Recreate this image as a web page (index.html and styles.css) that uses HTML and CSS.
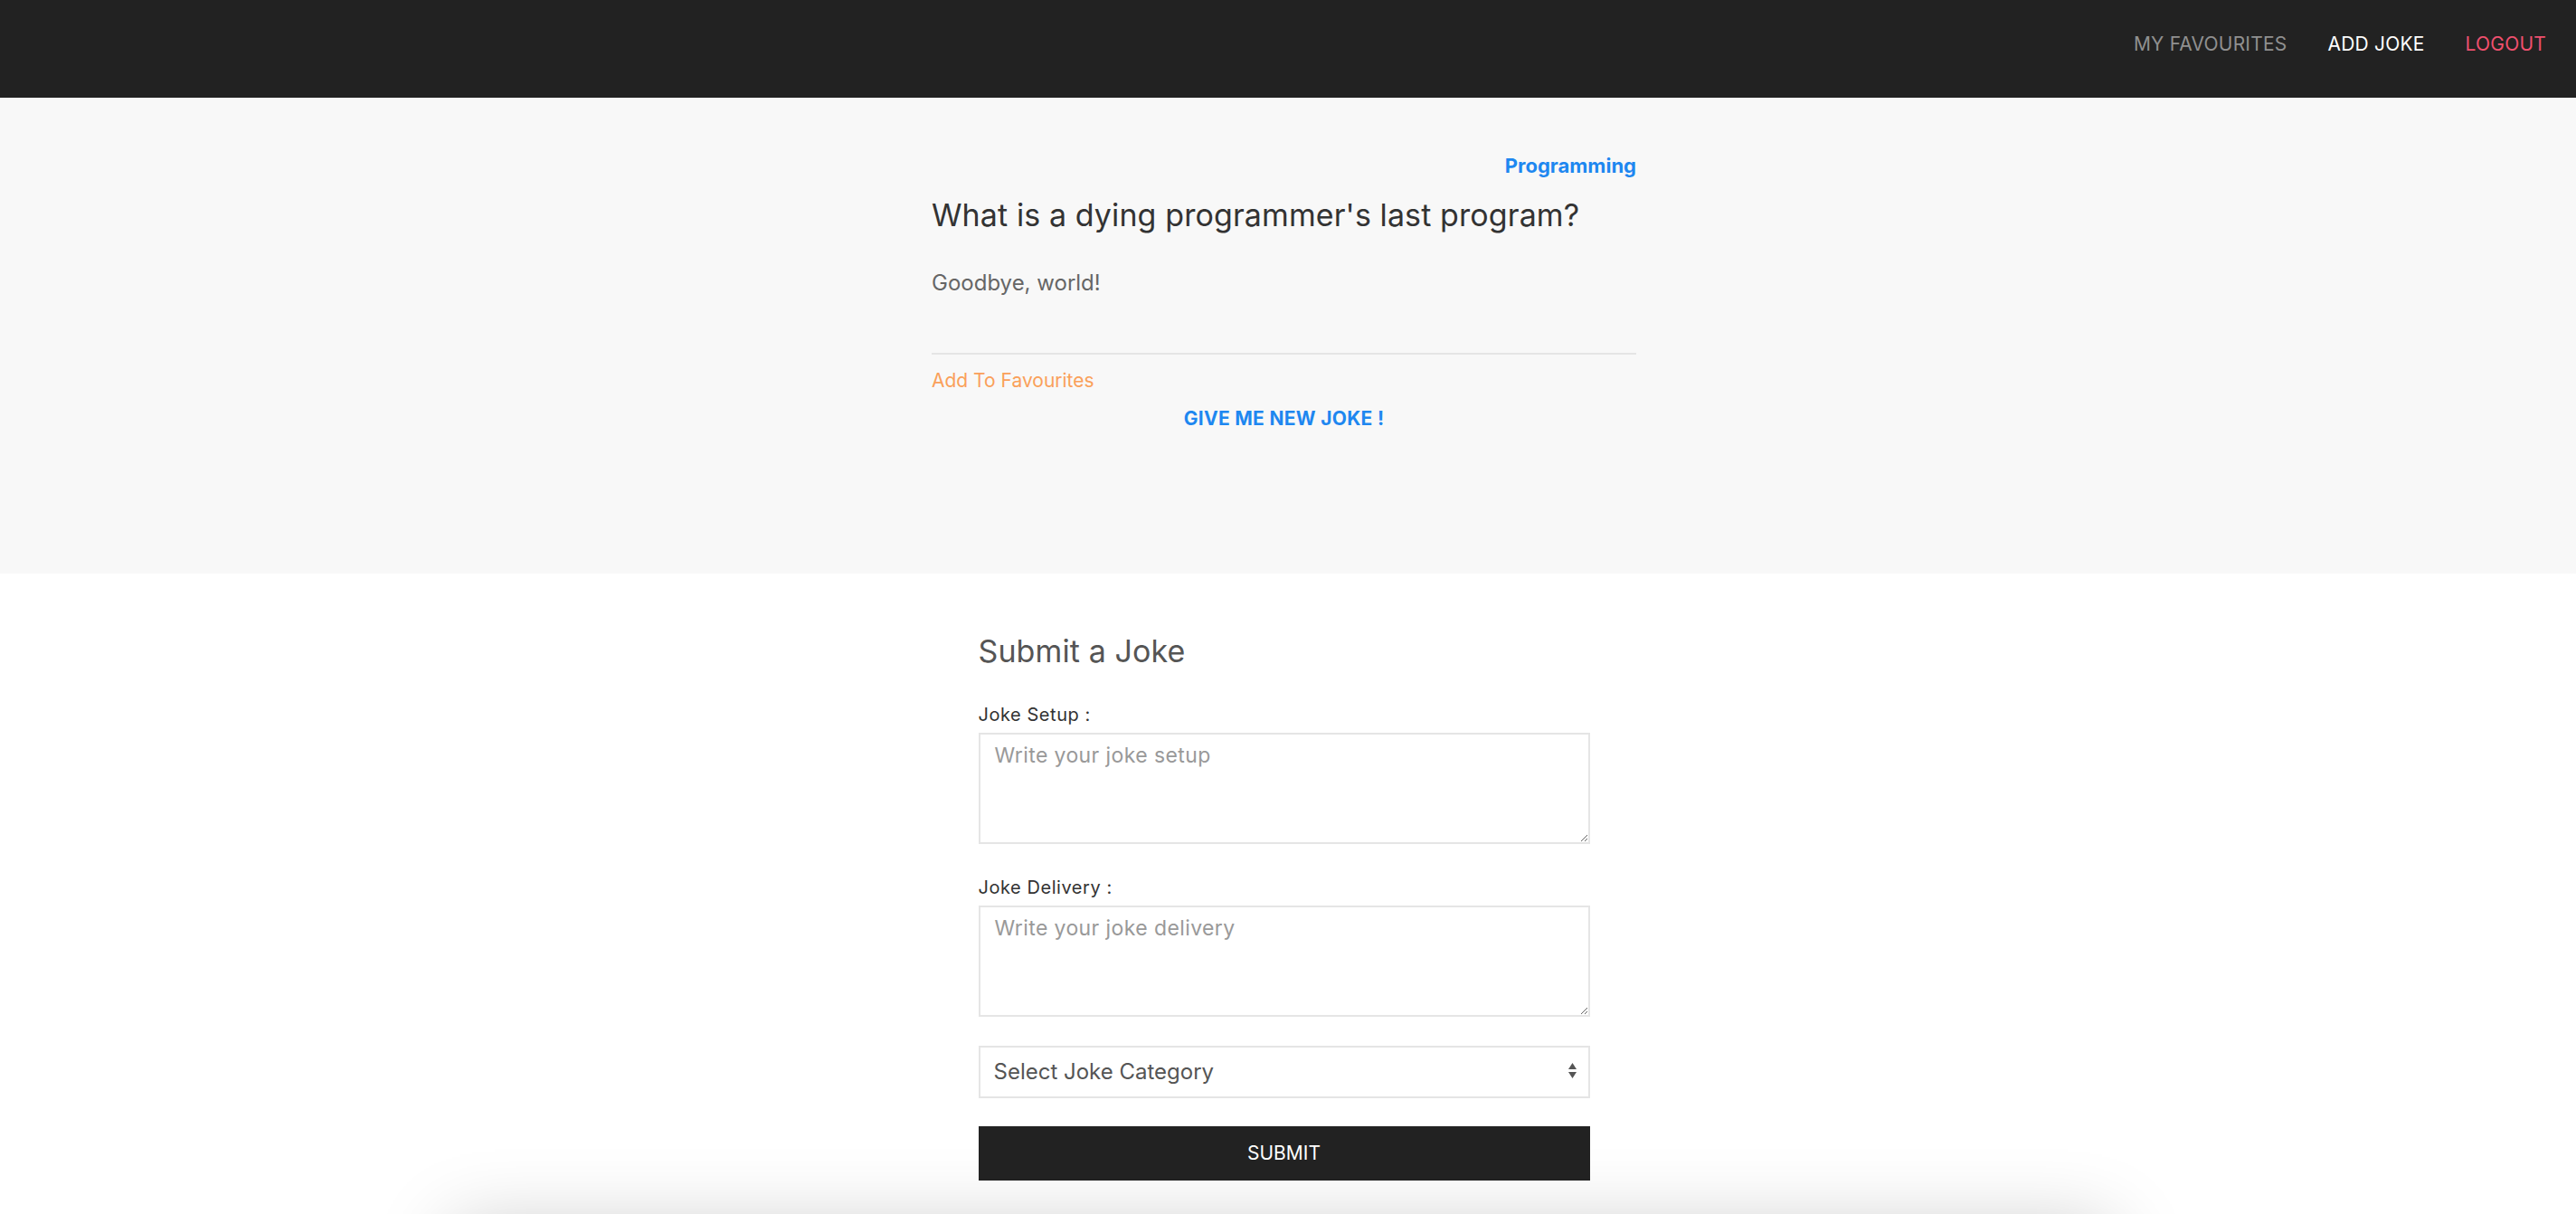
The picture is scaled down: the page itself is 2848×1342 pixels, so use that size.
FILE: index.html
```html
<!DOCTYPE html>
<html lang="en">
<head>
<meta charset="utf-8">
<title>Jokes</title>
<link rel="stylesheet" href="styles.css">
</head>
<body>
<nav class="navbar">
  <ul class="nav">
    <li class="nav-item nav-muted">MY FAVOURITES</li>
    <li class="nav-item nav-active">ADD JOKE</li>
    <li class="nav-item nav-danger">LOGOUT</li>
  </ul>
</nav>

<section class="hero">
  <article class="joke">
    <div class="joke-category">Programming</div>
    <h2 class="joke-setup">What is a dying programmer's last program?</h2>
    <p class="joke-delivery">Goodbye, world!</p>
    <hr class="joke-divider">
    <div class="joke-fav">Add To Favourites</div>
    <div class="joke-new">GIVE ME NEW JOKE !</div>
  </article>
</section>

<section class="submit-section">
  <form class="submit-form">
    <h3 class="form-title">Submit a Joke</h3>
    <label class="form-label">Joke Setup :</label>
    <textarea class="form-textarea" placeholder="Write your joke setup"></textarea>
    <label class="form-label form-label-second">Joke Delivery :</label>
    <textarea class="form-textarea" placeholder="Write your joke delivery"></textarea>
    <div class="select-wrap">
      <select class="form-select">
        <option>Select Joke Category</option>
        <option>Programming</option>
        <option>Misc</option>
        <option>Pun</option>
      </select>
      <svg class="select-arrows" width="9" height="17" viewBox="0 0 9 17">
        <polygon points="4.5,0 9,7 0,7" fill="#555"/>
        <polygon points="0,10 9,10 4.5,17" fill="#555"/>
      </svg>
    </div>
    <button type="button" class="form-button">SUBMIT</button>
  </form>
</section>

<div class="footer-wrap">
  <div class="footer-card"></div>
</div>
</body>
</html>
```

FILE: styles.css
```css
html, body {
  margin: 0;
  padding: 0;
  background: #fff;
}

body {
  font-family: Inter, "Noto Sans", Roboto, sans-serif;
  color: #666;
}

/* ---------- navbar ---------- */
.navbar {
  background: #222;
  height: 108px;
  box-sizing: border-box;
  padding-top: 36px;
  padding-right: 33px;
}

.nav {
  list-style: none;
  margin: 0;
  padding: 0;
  display: flex;
  justify-content: flex-end;
  gap: 45px;
}

.nav-item {
  font-size: 21px;
  line-height: 1.2;
  letter-spacing: 0.2px;
}

.nav-muted { color: #909090; }
.nav-active { color: #fff; }
.nav-danger { color: #f0506e; }

/* ---------- hero / joke ---------- */
.hero {
  background: #f8f8f8;
  height: 526px;
  box-sizing: border-box;
  padding-top: 62px;
  padding-right: 9px;
}

.joke {
  width: 779px;
  margin: 0 auto;
  display: flex;
  flex-direction: column;
}

.joke-category {
  align-self: flex-end;
  font-size: 22px;
  line-height: 1.2;
  font-weight: 700;
  color: #1e87f0;
}

.joke-setup {
  margin: 22px 0 0;
  font-size: 34px;
  line-height: 1.2;
  font-weight: 400;
  color: #333;
  letter-spacing: 0.1px;
}

.joke-delivery {
  margin: 40px 0 0;
  font-size: 24px;
  line-height: 1.2;
  color: #666;
}

.joke-divider {
  margin: 62px 0 0;
  border: 0;
  border-top: 2px solid #e5e5e5;
  height: 0;
}

.joke-fav {
  margin-top: 16px;
  font-size: 21px;
  line-height: 1.2;
  color: #faa05a;
}

.joke-new {
  margin-top: 17px;
  align-self: center;
  font-size: 21px;
  line-height: 1.2;
  font-weight: 700;
  letter-spacing: 0.3px;
  color: #1e87f0;
}

/* ---------- submit form ---------- */
.submit-section {
  padding-top: 66px;
  padding-right: 9px;
}

.submit-form {
  width: 676px;
  margin: 0 auto;
  display: flex;
  flex-direction: column;
}

.form-title {
  margin: 0;
  font-size: 34px;
  line-height: 1.2;
  font-weight: 400;
  color: #555;
  letter-spacing: 0.1px;
}

.form-label {
  margin-top: 37px;
  font-size: 20px;
  line-height: 1.2;
  letter-spacing: 0.55px;
  color: #333;
}

.form-label-second {
  margin-top: 36px;
}

.form-textarea {
  margin-top: 8px;
  height: 123px;
  box-sizing: border-box;
  border: 2px solid #e5e5e5;
  border-radius: 0;
  padding: 10px 16px;
  font-family: Inter, "Noto Sans", Roboto, sans-serif;
  font-size: 23px;
  line-height: 1.2;
  letter-spacing: 0.4px;
  color: #666;
  background: #fff;
  resize: vertical;
  outline: none;
}

.form-textarea::placeholder {
  color: #999;
}

.select-wrap {
  position: relative;
  margin-top: 32px;
}

.form-select {
  display: block;
  width: 100%;
  height: 58px;
  box-sizing: border-box;
  border: 2px solid #e5e5e5;
  border-radius: 0;
  padding: 0 40px 0 15px;
  font-family: Inter, "Noto Sans", Roboto, sans-serif;
  font-size: 24px;
  color: #555;
  background: #fff;
  appearance: none;
  -webkit-appearance: none;
  outline: none;
}

.select-arrows {
  position: absolute;
  right: 15px;
  top: 19px;
}

.form-button {
  margin-top: 31px;
  height: 60px;
  border: 0;
  border-radius: 0;
  background: #222;
  color: #fff;
  font-family: Inter, "Noto Sans", Roboto, sans-serif;
  font-size: 21px;
  letter-spacing: 0;
  cursor: pointer;
}

/* ---------- footer card (shadow peeking in) ---------- */
.footer-wrap {
  padding-top: 52px;
  padding-right: 16px;
}

.footer-card {
  width: 1833px;
  height: 400px;
  margin: 0 auto;
  background: #fff;
  box-shadow: 0 0 80px rgba(0, 0, 0, 0.22);
}
```
